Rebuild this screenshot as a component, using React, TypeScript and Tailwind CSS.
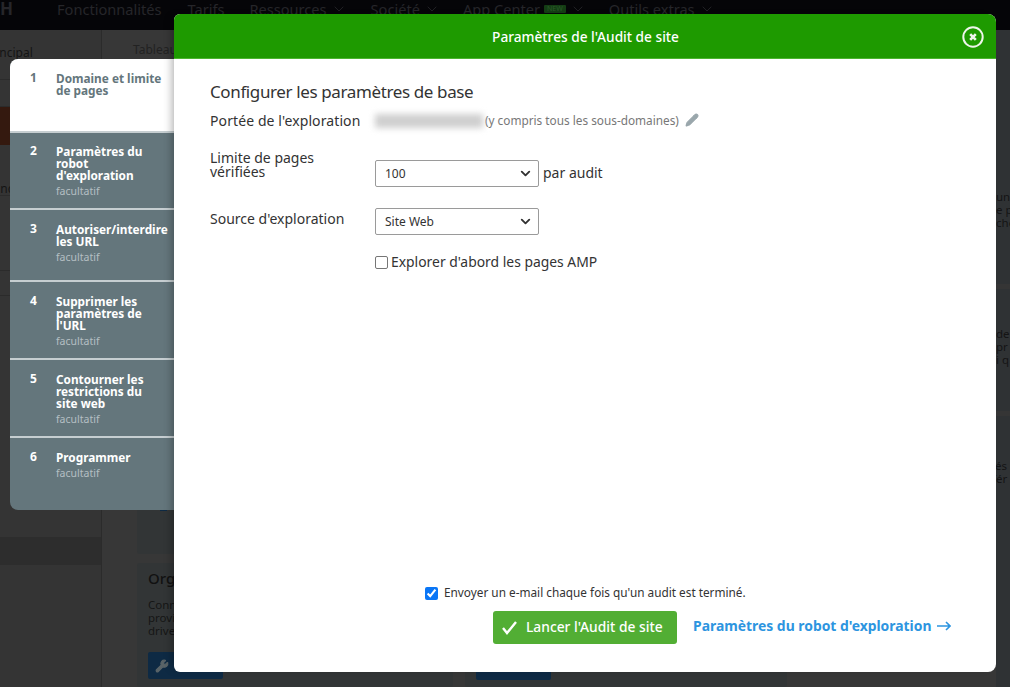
import { ChevronDown, Pencil, Wrench } from 'lucide-react';

const STEPS = [
  { n: 1, lines: ['Domaine et limite', 'de pages'], h: 'h-[74px]', pt: 'pt-[13px]', active: true },
  { n: 2, lines: ['Paramètres du', 'robot', "d'exploration"], h: 'h-[77px]', pt: 'pt-[12px]' },
  { n: 3, lines: ['Autoriser/interdire', 'les URL'], h: 'h-[72px]', pt: 'pt-[13px]' },
  { n: 4, lines: ['Supprimer les', 'paramètres de', "l'URL"], h: 'h-[78px]', pt: 'pt-[13px]' },
  { n: 5, lines: ['Contourner les', 'restrictions du', 'site web'], h: 'h-[78px]', pt: 'pt-[13px]' },
  { n: 6, lines: ['Programmer'], h: 'flex-1', pt: 'pt-[13px]' },
];

const NAV = [
  ['Fonctionnalités', 'ml-[43px]', false],
  ['Tarifs', 'ml-[26px]', false],
  ['Ressources', 'ml-[25px]', true],
  ['Société', 'ml-[24px]', true],
  ['App Center', 'ml-[23px]', true],
  ['Outils extras', 'ml-[23px]', true],
] as [string, string, boolean][];

function Select({ value }: { value: string }) {
  return (
    <div className="flex h-[27px] w-[164px] items-center justify-between rounded-[2px] border border-[#9a9a9a] bg-white pl-[9px] pr-[5px] text-[12px] text-[#333]">
      {value}
      <ChevronDown className="h-[15px] w-[15px] text-[#333]" strokeWidth={3} />
    </div>
  );
}

function SideText({ lines, className }: { lines: string[]; className: string }) {
  return (
    <div className={`whitespace-nowrap text-[11.5px] leading-[13px] text-[#141414] ${className}`}>
      {lines.map(l => <div key={l}>{l}</div>)}
    </div>
  );
}

export default function App() {
  return (
    <div className="relative h-[687px] w-[1010px] overflow-hidden bg-[#373737] font-['Noto_Sans',sans-serif]">
      {/* page behind the overlay */}
      <div className="flex h-[30px] items-start overflow-hidden bg-[#050508] text-[14.6px] leading-[18px] text-[#26262a]">
        <span className="w-[14px] text-[17px] font-bold">H</span>
        {NAV.map(([label, ml, chevron]) => (
          <span key={label} className={`flex items-center gap-[4px] ${ml}`}>
            {label}
            {label === 'App Center' && <span className="rounded-[1px] bg-[#143d14] px-[3px] text-[7px] leading-[8px] text-[#2a5a2a]">NEW</span>}
            {chevron && <ChevronDown className="h-[16px] w-[16px]" strokeWidth={1.25} />}
          </span>
        ))}
      </div>
      <div className="flex h-[657px]">
        <div className="w-[102px] shrink-0 overflow-hidden border-r border-[#2b2b2b] bg-[#343434] text-[12px] text-[#141414]">
          <div className="-ml-[16px] h-[50px] whitespace-nowrap border-b border-[#2b2b2b] pt-[14px]">Principal</div>
          <div className="h-[27px] border-b border-[#2b2b2b]" />
          <div className="h-[38px] bg-[#34190f]" />
          <div className="-ml-[15px] h-[51px] whitespace-nowrap border-b border-[#2b2b2b] pt-[35px]">Principal</div>
          <div className="h-[75px] border-b border-[#2b2b2b]" />
          <div className="h-[25px] border-b border-[#2b2b2b]" />
          <div className="mt-[241px] h-[28px] bg-[#2d2d2d]" />
        </div>
        <div className="flex-1 pl-[31px] text-[12px] text-[#222]">
          <div className="pt-[12px] leading-[16px]">Tableau</div>
          <div className="ml-[4px] mt-[442px] h-[54px] w-[39px] rounded-b-[3px] bg-[#323536] pl-[23px] pt-[8px]">
            <div className="h-[3px] w-[7px] bg-[#0e2a44]" />
          </div>
          <div className="ml-[4px] mt-[9px] flex h-[124px] w-[650px] gap-[12px]">
            <div className="h-full w-[316px] rounded-[3px] bg-[#323536] px-[11px] pt-[5px]">
              <div className="text-[15px] font-medium leading-[20px] text-[#111]">Orga</div>
              <div className="mt-[10px] text-[11.5px] leading-[13px] text-[#151515]">Conn<br />provi<br />drive</div>
              <div className="mt-[15px] flex h-[27px] w-[75px] items-center rounded-[2px] bg-[#0e2a44] pl-[7px]">
                <Wrench className="h-[14px] w-[14px] fill-[#5a6468] text-[#5a6468]" />
              </div>
            </div>
            <div className="h-full w-[322px] rounded-[3px] bg-[#323536] px-[11px] pt-[90px]">
              <div className="h-[27px] w-[75px] rounded-[2px] bg-[#0e2a44]" />
            </div>
          </div>
        </div>
        <div className="w-[14px] shrink-0 overflow-hidden bg-[#2f3234]">
          <SideText lines={['un', 'e p', 'che']} className="mt-[160px]" />
          <div className="mt-[55px] h-[5px] bg-[#353535]" />
          <SideText lines={['de', 'pr', 'i q']} className="mt-[38px]" />
          <div className="mt-[45px] h-[5px] bg-[#353535]" />
          <SideText lines={['lés', 'fér']} className="-ml-[4px] mt-[43px]" />
        </div>
      </div>

      {/* step list */}
      <div className="absolute left-[10px] top-[59px] flex h-[451px] w-[164px] flex-col overflow-hidden rounded-l-[8px] bg-[#64767c]">
        {STEPS.map((s, i) => (
          <div
            key={s.n}
            className={`flex shrink-0 pl-[20px] ${s.pt} ${s.h} ${s.active ? 'bg-white text-[#64767c]' : 'text-white'} ${i < 5 ? 'border-b-2 border-[#c6ced1]' : ''}`}
          >
            <span className="w-[26px] text-[12px] font-bold leading-[12px]">{s.n}</span>
            <div className="whitespace-nowrap text-[11.8px] font-bold leading-[12px]">
              {s.lines.map(l => <div key={l}>{l}</div>)}
              {!s.active && <div className="mt-[4px] text-[10.5px] font-normal leading-[13px] text-[#b4bfc3]">facultatif</div>}
            </div>
          </div>
        ))}
      </div>

      {/* modal */}
      <div className="absolute left-[174px] top-[14px] flex h-[658px] w-[822px] flex-col overflow-hidden rounded-[8px] rounded-l-[6px] bg-white shadow-[-6px_0_8px_-4px_rgba(0,0,0,0.3)]">
        <div className="relative flex h-[45px] shrink-0 items-center justify-center border-b border-[#4cb52f] bg-[#1e9a00] pl-[1px] pt-[3px] text-[13.7px] font-medium text-white">
          Paramètres de l'Audit de site
          <svg className="absolute right-[12px] top-[12px] h-[22px] w-[22px]" viewBox="0 0 22 22" fill="none" stroke="#eef5ea">
            <circle cx="11" cy="11" r="9.7" strokeWidth="2" />
            <path d="M8.2 8.2l5.6 5.6M13.8 8.2l-5.6 5.6" strokeWidth="2.6" />
          </svg>
        </div>
        <div className="flex flex-1 flex-col pl-[36px] text-[14px] text-[#333]">
          <h2 className="mt-[22px] text-[17px] font-normal leading-[22px] tracking-[-0.38px] text-[#333]">Configurer les paramètres de base</h2>
          <div className="mt-[6px] flex h-[22px] items-center">
            <span className="w-[165px] tracking-[0.1px]">Portée de l'exploration</span>
            <span className="mt-[2px] h-[14px] w-[108px] bg-[#cfcfcf] blur-[3px]" />
            <span className="ml-[2px] mt-[1px] text-[11.8px] text-[#777]">(y compris tous les sous-domaines)</span>
            <Pencil className="ml-[6px] h-[14px] w-[14px] fill-[#9aa7ac] text-[#9aa7ac]" />
          </div>
          <div className="mt-[20px] flex">
            <span className="w-[165px] leading-[14px]">Limite de pages<br />vérifiées</span>
            <div className="mt-[9px] flex items-center gap-[4px]">
              <Select value="100" />
              <span className="-mt-[2px]">par audit</span>
            </div>
          </div>
          <div className="mt-[21px] flex">
            <span className="w-[165px]">Source d'exploration</span>
            <Select value="Site Web" />
          </div>
          <label className="ml-[165px] mt-[17px] flex items-center gap-[3px] text-[13.9px]">
            <span className="h-[13px] w-[13px] rounded-[2px] border border-[#767676] bg-white" />
            Explorer d'abord les pages AMP
          </label>

          <div className="mt-auto flex flex-col pb-[28px]">
            <label className="ml-[215px] flex items-center gap-[6px] text-[11.8px] text-[#333]">
              <input type="checkbox" checked readOnly className="m-0 h-[13px] w-[13px] accent-[#0a76f6]" />
              Envoyer un e-mail chaque fois qu'un audit est terminé.
            </label>
            <div className="ml-[283px] mt-[9px] flex items-center">
              <button className="flex h-[33px] w-[184px] items-center rounded-[3px] bg-[#52ae34] pl-[9px] text-[13.8px] font-medium text-white">
                <svg className="h-[15px] w-[15px]" viewBox="0 0 15 15" fill="none" stroke="currentColor" strokeWidth="2.4">
                  <path d="M1 8l4 5 9-11" />
                </svg>
                <span className="ml-[9px]">Lancer l'Audit de site</span>
              </button>
              <span className="-mt-[2px] ml-[16px] flex items-center gap-[6px] text-[13.9px] font-bold text-[#2d95e0]">
                Paramètres du robot d'exploration
                <svg className="h-[10px] w-[14px]" viewBox="0 0 14 10" fill="none" stroke="currentColor" strokeWidth="1.6">
                  <path d="M0 5h13M9 1l4 4-4 4" />
                </svg>
              </span>
            </div>
          </div>
        </div>
      </div>
    </div>
  );
}
